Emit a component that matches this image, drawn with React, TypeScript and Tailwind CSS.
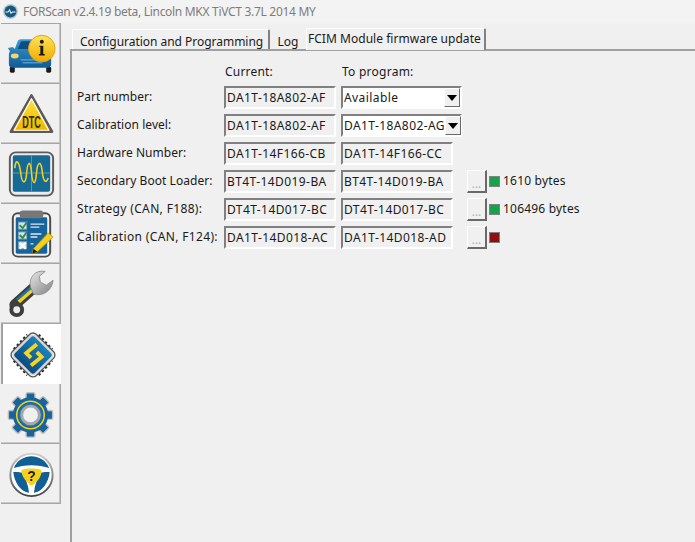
import type { ReactNode } from "react";

const rows = [
  { label: "Part number:", current: "DA1T-18A802-AF", next: "Available", select: true },
  { label: "Calibration level:", current: "DA1T-18A802-AF", next: "DA1T-18A802-AG", select: true },
  { label: "Hardware Number:", current: "DA1T-14F166-CB", next: "DA1T-14F166-CC" },
  { label: "Secondary Boot Loader:", current: "BT4T-14D019-BA", next: "BT4T-14D019-BA", status: "ok", bytes: "1610 bytes" },
  { label: "Strategy (CAN, F188):", wide: true, current: "DT4T-14D017-BC", next: "DT4T-14D017-BC", status: "ok", bytes: "106496 bytes" },
  { label: "Calibration (CAN, F124):", wide: true, current: "DA1T-14D018-AC", next: "DA1T-14D018-AD", status: "bad" },
];

function CarIcon() {
  return (
    <svg width="60" height="59" viewBox="0 0 60 59">
      <defs>
        <linearGradient id="car" x1="0" y1="0" x2="0" y2="1">
          <stop offset="0" stopColor="#3a9ad0" />
          <stop offset="1" stopColor="#0f5b96" />
        </linearGradient>
        <linearGradient id="coin" x1="0" y1="0" x2="0" y2="1">
          <stop offset="0" stopColor="#ffe45a" />
          <stop offset="1" stopColor="#f2a900" />
        </linearGradient>
      </defs>
      <rect x="9" y="43" width="5" height="6" rx="1.5" fill="#1b1b1b" />
      <rect x="46" y="43" width="5" height="6" rx="1.5" fill="#1b1b1b" />
      <path d="M7 24l5-1 2 2 3-8c1-2 3-2 5-2h18c3 0 4 1 5 3l3 7 3 4v11c0 2-1 4-3 4H11c-2 0-3-2-3-4V30l1-3z" fill="url(#car)" />
      <path d="M17 25l3-7c0-1 2-1 3-1h15c2 0 3 1 3 2l2 6z" fill="#0d4e82" />
      <ellipse cx="14" cy="32" rx="4" ry="2.5" fill="#f5d76e" />
      <path d="M20 36h24M22 39h20" stroke="#6bb8e2" strokeWidth="1" />
      <circle cx="41.5" cy="24.5" r="13.5" fill="url(#coin)" stroke="#eaa200" />
      <circle cx="41.5" cy="17.5" r="2" fill="#1a1a1a" />
      <path d="M39 21.5h4v8.5h1.5v1.5h-6V30H40v-7h-1z" fill="#1a1a1a" />
    </svg>
  );
}

function DtcIcon() {
  return (
    <svg width="60" height="59" viewBox="0 0 60 59">
      <defs>
        <linearGradient id="dtc" x1="0" y1="0" x2="0" y2="1">
          <stop offset="0" stopColor="#ffe640" />
          <stop offset="1" stopColor="#eeb400" />
        </linearGradient>
      </defs>
      <path d="M31 11L52 48H10z" fill="url(#dtc)" stroke="#5a5a5a" strokeWidth="2.5" strokeLinejoin="round" />
      <path d="M31 14.5L48.5 46.5H13.5z" fill="none" stroke="#fff" strokeWidth="1.2" strokeLinejoin="round" />
      <text x="31" y="44" textAnchor="middle" fontFamily="'Liberation Sans',sans-serif" fontWeight="700" fontSize="17" textLength="19" lengthAdjust="spacingAndGlyphs" fill="#3a3000">DTC</text>
    </svg>
  );
}

function ScopeIcon() {
  return (
    <svg width="60" height="59" viewBox="0 0 60 59">
      <rect x="9" y="8" width="44" height="44" rx="6" fill="#ececec" stroke="#5c5c5c" strokeWidth="2" />
      <rect x="12" y="11" width="38" height="37" rx="2" fill="#156a96" />
      <path d="M12 29h38M31 11v37" stroke="#5f9f98" strokeWidth="1" />
      <path d="M14 24C15 14 18 16 20 28C21 40 25 42 26 30C27 16 30 16 31 28C32 42 35 42 36 30C37 16 41 16 42 28C43 38 46 40 48 34" fill="none" stroke="#f5cf1f" strokeWidth="1.6" />
    </svg>
  );
}

function ClipboardIcon() {
  return (
    <svg width="60" height="59" viewBox="0 0 60 59">
      <rect x="12" y="9" width="38" height="44" rx="5" fill="#f2f2f2" stroke="#4c4c4c" strokeWidth="2" />
      <rect x="15" y="13" width="32" height="37" rx="1.5" fill="#15659c" />
      <rect x="19" y="6" width="24" height="8" rx="3" fill="#777" />
      <g fill="#d9e4e6" stroke="#9ab">
        <rect x="18" y="18" width="8" height="7" />
        <rect x="18" y="28" width="8" height="7" />
        <rect x="18" y="38" width="8" height="7" />
      </g>
      <path d="M19 21l3 3 5-7M19 31l3 3 5-7" fill="none" stroke="#2f8f5b" strokeWidth="2" />
      <path d="M19 39l6 6M25 39l-6 6" stroke="#fff" strokeWidth="2" />
      <path d="M30 20h14M30 23h9M30 30h11M30 33h7M30 40h3" stroke="#d6e8f2" strokeWidth="1.4" />
      <path d="M33 45l15-16 5 4-16 15-5 2z" fill="#f6cf1c" stroke="#c89a00" strokeWidth="0.8" />
      <path d="M32 50l1-5 4 3z" fill="#222" />
    </svg>
  );
}

function WrenchIcon() {
  return (
    <svg width="60" height="59" viewBox="0 0 60 59">
      <defs>
        <linearGradient id="steel" x1="0" y1="0" x2="1" y2="1">
          <stop offset="0" stopColor="#e8e8e8" />
          <stop offset="1" stopColor="#808080" />
        </linearGradient>
      </defs>
      <path d="M33 24L14 41" stroke="#3e3e3e" strokeWidth="11" strokeLinecap="round" />
      <path d="M33 25L18 38" stroke="#f1d21b" strokeWidth="3.5" />
      <path d="M31 23L16 36" stroke="#1a76a8" strokeWidth="2.5" />
      <path d="M45 7C35 5 28 13 30 23L33 30C42 33 52 27 53 16L46 21L40 18L39 12Z" fill="url(#steel)" stroke="#8a8a8a" strokeWidth="0.8" />
      <circle cx="16" cy="46" r="7.5" fill="#3e3e3e" />
      <circle cx="16" cy="46" r="3.5" fill="#ececec" />
    </svg>
  );
}

function ChipIcon() {
  return (
    <svg width="60" height="60" viewBox="0 0 60 60">
      <defs>
        <linearGradient id="chip" x1="0" y1="0" x2="0" y2="1">
          <stop offset="0" stopColor="#1a84bd" />
          <stop offset="1" stopColor="#0c4b82" />
        </linearGradient>
      </defs>
      <g transform="translate(1 1)">
        <g stroke="#262626" strokeWidth="2" strokeDasharray="2.5 2.4" fill="none">
          <path d="M10 24L24 9" />
          <path d="M36 9L50 24" />
          <path d="M10 36L24 51" />
          <path d="M36 51L50 36" />
        </g>
        <rect x="14.5" y="14.5" width="31" height="31" rx="4" transform="rotate(45 30 30)" fill="url(#chip)" stroke="#d8d8d8" strokeWidth="2" />
        <rect x="12.5" y="12.5" width="35" height="35" rx="5" transform="rotate(45 30 30)" fill="none" stroke="#555" strokeWidth="1.4" />
      </g>
      <path d="M35 20L24 29L29 34M29 42L40 33L35 28" fill="none" stroke="#f8d41e" strokeWidth="4" />
    </svg>
  );
}

function GearIcon() {
  const teeth = [0, 45, 90, 135, 180, 225, 270, 315];
  return (
    <svg width="60" height="59" viewBox="0 0 60 59">
      {teeth.map((a) => (
        <rect key={a} x="25.5" y="8.5" width="9" height="12" rx="1.5" transform={`rotate(${a} 30 31)`} fill="#1a649c" stroke="#bdbdbd" strokeWidth="1.4" />
      ))}
      <circle cx="30" cy="31" r="18" fill="#1a649c" />
      <circle cx="30" cy="31" r="14" fill="none" stroke="#f2d21e" strokeWidth="1.6" />
      <circle cx="30" cy="31" r="12" fill="#2276ae" />
      <circle cx="30" cy="31" r="9" fill="#f0f0f0" stroke="#a8a8a8" strokeWidth="3" />
    </svg>
  );
}

function WheelIcon() {
  return (
    <svg width="60" height="59" viewBox="0 0 60 59">
      <defs>
        <linearGradient id="rim" x1="0" y1="0" x2="0" y2="1">
          <stop offset="0" stopColor="#d0d0d0" />
          <stop offset="1" stopColor="#444" />
        </linearGradient>
      </defs>
      <circle cx="31" cy="31" r="21.5" fill="#fff" stroke="url(#rim)" strokeWidth="2" />
      <path d="M13 24c3-8 11-12 18-12s15 4 18 12c-5-2-12-3-18-3s-13 1-18 3z" fill="#125f96" />
      <path d="M12.5 28c4 0 9 0 11 2l4 13 1 6c-9-1-15-11-16-21z" fill="#125f96" />
      <path d="M49.5 28c-4 0-9 0-11 2l-4 13-1 6c9-1 15-11 16-21z" fill="#125f96" />
      <path d="M21 26c6-2 14-2 20 0 1 5-3 12-10 16-6-4-11-11-10-16z" fill="#f7d21c" />
      <text x="31" y="37" textAnchor="middle" fontFamily="'Liberation Sans',sans-serif" fontWeight="700" fontSize="14" fill="#1a1a1a">?</text>
    </svg>
  );
}

function SideButton({ active, children }: { active?: boolean; children: ReactNode }) {
  return (
    <div
      className={
        active
          ? "flex h-[60px] items-center justify-center border-l-2 border-[#a0a0a0] bg-white"
          : "flex h-[60px] items-center justify-center border-r border-b border-[#a6a6a6] shadow-[inset_0_-1px_0_#c8c8c8,inset_-1px_0_0_#c8c8c8]"
      }
    >
      {children}
    </div>
  );
}

function Field({ children }: { children: ReactNode }) {
  return (
    <div className="flex h-[23px] w-[112px] items-center whitespace-nowrap border-2 border-t-[#808080] border-l-[#808080] border-r-white border-b-white pl-[1px] tracking-[0.42px]">
      {children}
    </div>
  );
}

function SelectField({ value }: { value: string }) {
  return (
    <div className="flex h-[23px] w-[121px] items-center whitespace-nowrap border-2 border-t-[#808080] border-l-[#808080] border-r-white border-b-white bg-white pl-[1px] tracking-[0.42px]">
      <span className="flex-1">{value}</span>
      <span className="flex h-[19px] w-[16px] shrink-0 items-center justify-center border border-t-white border-l-white border-r-[#696969] border-b-[#696969] bg-[#f0f0f0]">
        <span className="h-0 w-0 border-x-[5px] border-t-[6px] border-x-transparent border-t-black" />
      </span>
    </div>
  );
}

function Row(row: { label: string; wide?: boolean; current: string; next: string; select?: boolean; status?: string; bytes?: string }) {
  return (
    <>
      <div className={`-mt-[2px] whitespace-nowrap ${row.wide ? "tracking-[0.35px]" : "tracking-[0.05px]"}`}>{row.label}</div>
      <Field>{row.current}</Field>
      {row.select ? <SelectField value={row.next} /> : <Field>{row.next}</Field>}
      {row.status ? (
        <div className="ml-[9px] flex h-[23px] w-[20px] items-center justify-center border border-t-white border-l-white border-r-2 border-b-2 border-r-[#696969] border-b-[#696969] pt-[6px] text-[#b0b0b0]">...</div>
      ) : (
        <div />
      )}
      {row.status ? (
        <div className="-ml-[3px] flex items-center gap-[3px] whitespace-nowrap">
          <span className={`h-[11px] w-[11px] border border-[#808080] ${row.status === "ok" ? "bg-[#16a34a]" : "bg-[#8f1010]"}`} />
          <span className="-mt-[2px] tracking-[0.2px]">{row.bytes}</span>
        </div>
      ) : (
        <div />
      )}
    </>
  );
}

export default function App() {
  return (
    <div className="flex h-[542px] w-[695px] flex-col overflow-hidden bg-[#f0f0f0] text-[12px] leading-none text-[#1a1a1a] [font-family:'Noto_Sans',sans-serif]">
      <div className="flex h-[23px] shrink-0 items-center gap-[5px] bg-[#f3f3f3] pl-[3px]">
        <svg width="15" height="15" viewBox="0 0 15 15">
          <circle cx="7.5" cy="7.5" r="7.5" fill="#b9c9d3" />
          <circle cx="7.5" cy="7.5" r="6" fill="#17587f" />
          <path d="M2.5 8h3l1-2.5 1.5 4 1-1.5h3.5" fill="none" stroke="#fff" strokeWidth="1" />
        </svg>
        <span className="tracking-[-0.3px] text-[#7d7d7d]">FORScan v2.4.19 beta, Lincoln MKX TiVCT 3.7L 2014 MY</span>
      </div>
      <div className="flex flex-1">
        <div className="ml-[1px] w-[60px] shrink-0 border-t border-[#a6a6a6]">
          <SideButton><CarIcon /></SideButton>
          <SideButton><DtcIcon /></SideButton>
          <SideButton><ScopeIcon /></SideButton>
          <SideButton><ClipboardIcon /></SideButton>
          <SideButton><WrenchIcon /></SideButton>
          <SideButton active><ChipIcon /></SideButton>
          <SideButton><GearIcon /></SideButton>
          <SideButton><WheelIcon /></SideButton>
        </div>
        <div className="ml-[9px] flex flex-1 flex-col pt-[3px]">
          <div className="relative z-10 flex h-[23px] items-end pl-[2px]">
            <div className="flex h-[20px] w-[198px] items-center rounded-t-[2px] border-t border-l border-white border-r-2 border-r-[#808080] pl-[7px] pt-[5px] tracking-[-0.03px]">Configuration and Programming</div>
            <div className="flex h-[20px] w-[36px] items-center justify-center pt-[5px]">Log</div>
            <div className="-mb-[1px] flex h-[22px] w-[180px] items-center rounded-t-[2px] border-t border-l border-white border-r-2 border-r-[#808080] bg-[#f0f0f0] pl-[1px] pb-[1px] tracking-[0.03px]">FCIM Module firmware update</div>
          </div>
          <div className="flex-1 border-t-2 border-l-2 border-[#a0a0a0] pl-[5px] pt-[15px]">
            <div className="grid grid-cols-[142px_112px_112px_29px_auto] items-center justify-start gap-x-[5px] gap-y-[5px]">
              <div />
              <div className="h-[15px] self-start pl-[1px] tracking-[0.2px]">Current:</div>
              <div className="h-[15px] self-start pl-[1px] tracking-[0.25px]">To program:</div>
              <div />
              <div />
              {rows.map((row) => (
                <Row key={row.label} {...row} />
              ))}
            </div>
          </div>
        </div>
      </div>
    </div>
  );
}
